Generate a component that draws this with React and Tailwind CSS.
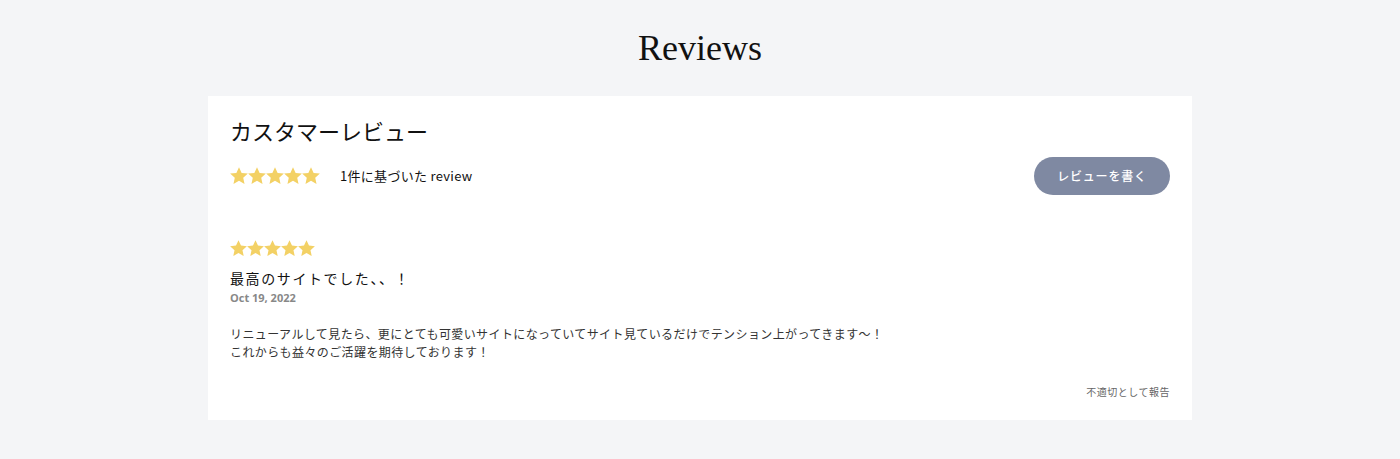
import React from 'react';

const jp = "font-['Noto_Sans_CJK_JP','Noto_Sans',sans-serif]";

// five-point star used for ratings
function Star({ size }) {
  return (
    <svg width={size} height={size} viewBox="1.6 1.6 20.8 20.8" className="shrink-0">
      <path
        d="M12 1.8l3.05 6.6 7.2.78-5.37 4.88 1.5 7.1L12 17.55 5.62 21.16l1.5-7.1L1.75 9.18l7.2-.78z"
        fill="#f3d165"
      />
    </svg>
  );
}

function Stars({ size }) {
  return (
    <div className="flex">
      {[0, 1, 2, 3, 4].map((i) => (
        <Star key={i} size={size} />
      ))}
    </div>
  );
}

function App() {
  return (
    <div className={`min-h-[459px] bg-[#f4f5f7] pt-[26px] ${jp}`}>
      <h2 className="text-center font-['Liberation_Serif',serif] text-[36px] leading-[44px] text-[#111]">
        Reviews
      </h2>

      <div className="mx-auto mt-[26px] w-[984px] bg-white px-[22px] pt-[18px] pb-[20px]">
        <h3 className="text-[22px] leading-[33px] text-[#111]">カスタマーレビュー</h3>

        <div className="mt-[10px] flex h-[38px] items-center justify-between">
          <div className="flex items-center">
            <Stars size={18} />
            <span className="ml-[20px] text-[13px] tracking-[0.3px] text-[#111]">1件に基づいた review</span>
          </div>
          <button className="h-[38px] w-[136px] rounded-full bg-[#7f89a2] text-[12px] font-medium tracking-[0.8px] text-white">
            レビューを書く
          </button>
        </div>

        <div className="mt-[45px]">
          <Stars size={17} />
        </div>
        <div className="mt-[11px] text-[14px] leading-[20px] tracking-[1.6px] text-[#111]">
          最高のサイトでした、、！
        </div>
        <div className="mt-[2px] font-['Open_Sans',sans-serif] text-[11px] font-bold leading-[16px] text-[#888]">
          Oct 19, 2022
        </div>
        <div className="mt-[19px] text-[12px] leading-[18px] tracking-[0.4px] text-[#333]">
          <p>リニューアルして見たら、更にとても可愛いサイトになっていてサイト見ているだけでテンション上がってきます〜！</p>
          <p>これからも益々のご活躍を期待しております！</p>
        </div>
        <div className="mt-[23px] text-right text-[10px] leading-[16px] tracking-[0.5px] text-[#666]">
          不適切として報告
        </div>
      </div>
    </div>
  );
}

export default App;
